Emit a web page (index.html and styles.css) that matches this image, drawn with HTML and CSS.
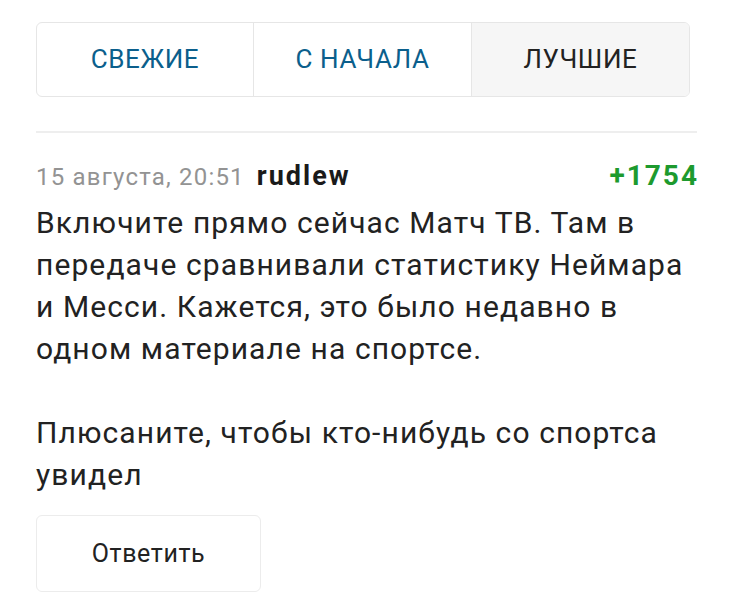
FILE: index.html
```html
<!doctype html>
<html>

<head>
    <meta charset="utf-8">
    <meta name="viewport" content="width=device-width, initial-scale=1">
    <title>Комментарии</title>
    <link rel="stylesheet" href="styles.css">
</head>

<body>
    <div class="page">
        <div class="tabs">
            <div class="tab link">СВЕЖИЕ</div>
            <div class="tab link">С НАЧАЛА</div>
            <div class="tab active">ЛУЧШИЕ</div>
        </div>
        <div class="sep"></div>
        <div class="comment">
            <div class="meta">
                <span class="date">15 августа, 20:51</span>
                <span class="author">rudlew</span>
                <span class="rating">+1754</span>
            </div>
            <div class="text">
                <p>Включите прямо сейчас Матч ТВ. Там в передаче сравнивали статистику Неймара и Месси. Кажется, это было недавно в одном материале на спортсе.</p>
                <p>Плюсаните, чтобы кто-нибудь со спортса увидел</p>
            </div>
            <div class="reply">Ответить</div>
        </div>
    </div>
</body>

</html>
```

FILE: styles.css
```css
body {
    margin: 0;
    background: #fff;
    font-family: Roboto, "Noto Sans", sans-serif;
    color: #222;
}
.page {
    width: 661px;
    padding: 22px 0 0 36px;
}
.tabs {
    display: grid;
    grid-template-columns: 216px 1fr 1fr;
    width: 652px;
    height: 73px;
    border: 1px solid #e6e6e6;
    border-radius: 6px;
    overflow: hidden;
}
.tab {
    display: flex;
    align-items: center;
    justify-content: center;
    font-size: 26px;
    letter-spacing: 0.6px;
    padding-bottom: 2px;
    border-left: 1px solid #e6e6e6;
}
.tab:first-child {
    border-left: none;
}
.link {
    color: #0b5f8c;
}
.active {
    color: #222;
    background: #f6f6f6;
}
.sep {
    height: 2px;
    background: #eeeeee;
    margin-top: 34px;
}
.meta {
    display: flex;
    align-items: baseline;
    margin-top: 27px;
    line-height: 32px;
}
.date {
    font-size: 24px;
    letter-spacing: 1.2px;
    color: #939393;
    margin-right: 12px;
}
.author {
    font-size: 27px;
    font-weight: bold;
    letter-spacing: 2px;
    color: #1a1a1a;
}
.rating {
    margin-left: auto;
    font-size: 28px;
    font-weight: bold;
    letter-spacing: 2px;
    margin-right: -2px;
    color: #1d9a2e;
}
.text {
    font-size: 30px;
    letter-spacing: 1.1px;
    line-height: 42px;
    margin-top: 9px;
}
.text p {
    margin: 0 0 42px;
}
.text p:last-child {
    margin-bottom: 0;
}
.reply {
    display: flex;
    align-items: center;
    justify-content: center;
    width: 223px;
    height: 75px;
    margin-top: 19px;
    border: 1px solid #ececec;
    border-radius: 6px;
    font-size: 25px;
    letter-spacing: 0.6px;
    color: #222;
}
```
